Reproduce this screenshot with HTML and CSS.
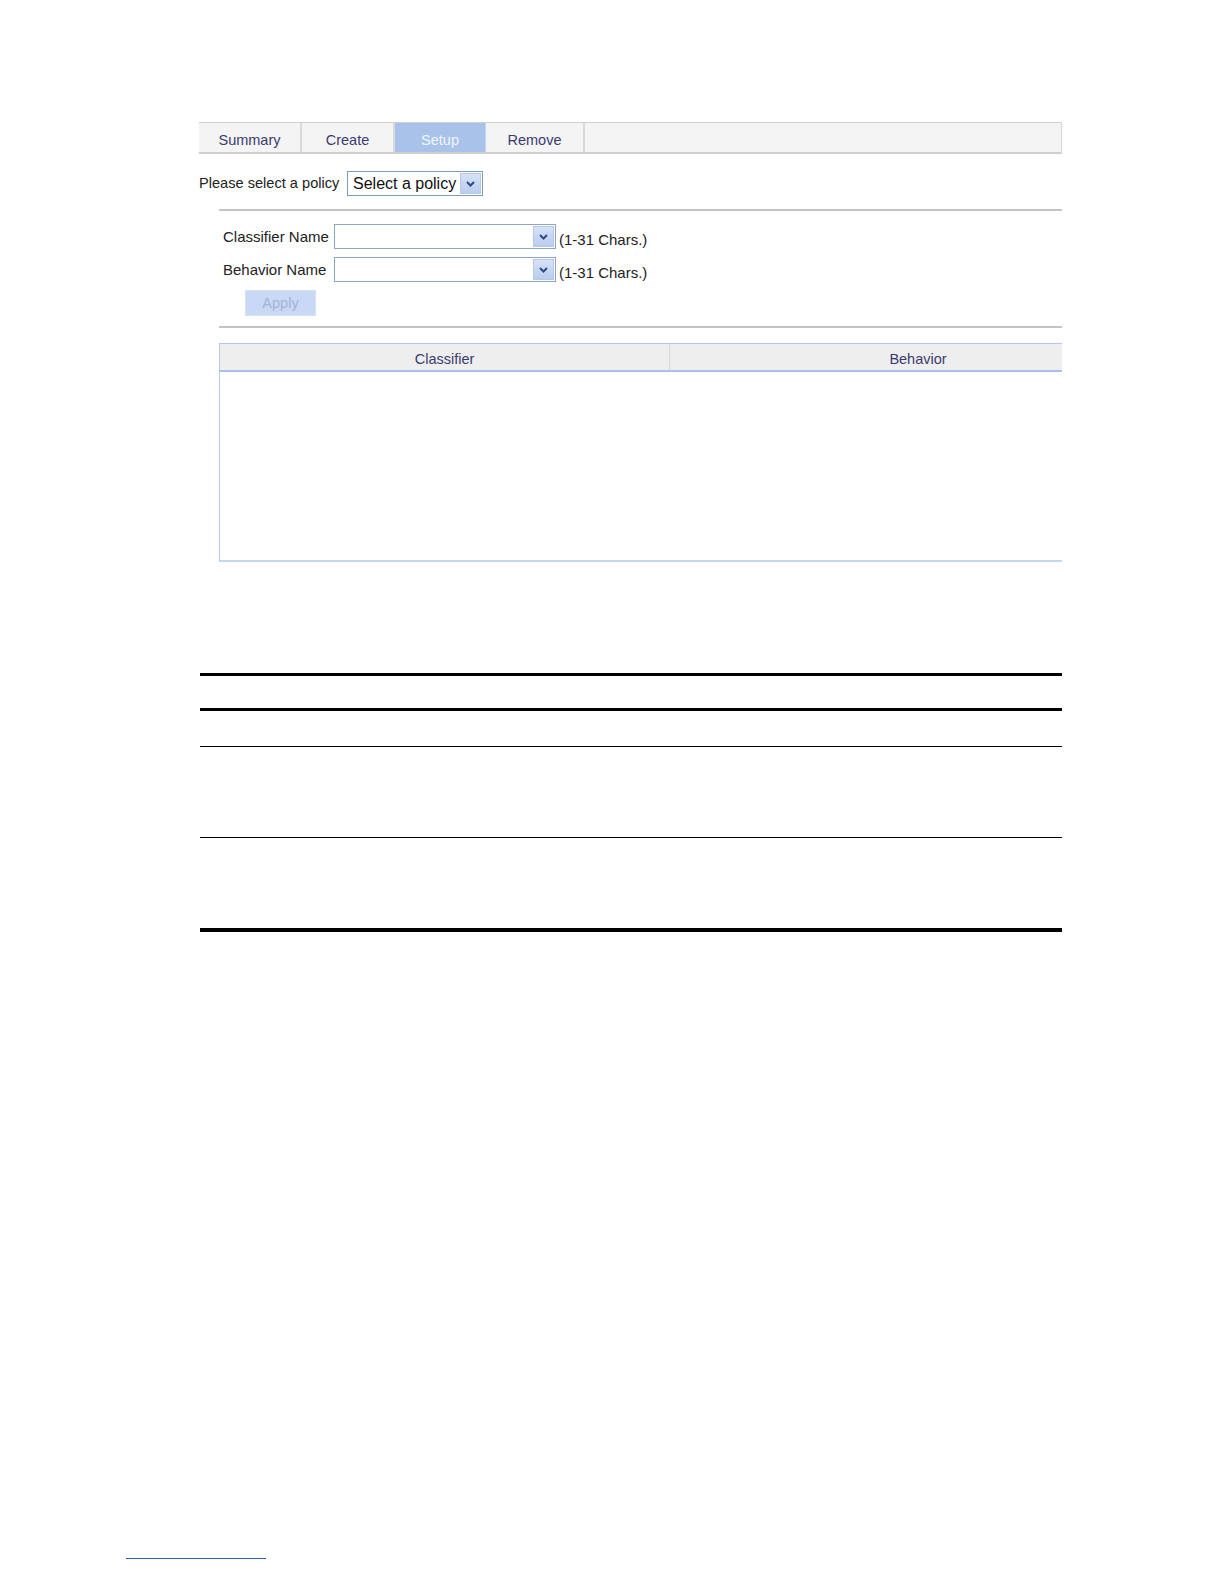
FILE: index.html
```html
<!DOCTYPE html>
<html>
<head>
<meta charset="utf-8">
<link rel="stylesheet" href="styles.css">
</head>
<body>
<div class="page">
  <div class="tabs">
    <div class="tab t-summary">Summary</div>
    <div class="tab t-create">Create</div>
    <div class="tab t-setup active">Setup</div>
    <div class="tab t-remove">Remove</div>
    <div class="tab-fill"></div>
  </div>

  <div class="policy-row">
    <span class="policy-label">Please select a policy</span>
    <div class="select policy-select">
      <span class="select-text">Select a policy</span>
      <span class="arrow"><svg width="9" height="6" viewBox="0 0 9 6"><path d="M1 1 L4.5 4.5 L8 1" fill="none" stroke="#2d4a8a" stroke-width="2"/></svg></span>
    </div>
  </div>

  <div class="panel">
    <div class="rule"></div>
    <div class="form-row">
      <span class="label">Classifier Name</span>
      <div class="select combo">
        <span class="select-text"></span>
        <span class="arrow"><svg width="9" height="6" viewBox="0 0 9 6"><path d="M1 1 L4.5 4.5 L8 1" fill="none" stroke="#2d4a8a" stroke-width="2"/></svg></span>
      </div>
      <span class="hint">(1-31 Chars.)</span>
    </div>
    <div class="form-row second">
      <span class="label">Behavior Name</span>
      <div class="select combo">
        <span class="select-text"></span>
        <span class="arrow"><svg width="9" height="6" viewBox="0 0 9 6"><path d="M1 1 L4.5 4.5 L8 1" fill="none" stroke="#2d4a8a" stroke-width="2"/></svg></span>
      </div>
      <span class="hint">(1-31 Chars.)</span>
    </div>
    <div class="btn-row">
      <div class="apply">Apply</div>
    </div>
    <div class="rule rule2"></div>

    <div class="grid">
      <div class="grid-head">
        <div class="col c1">Classifier</div>
        <div class="col c2">Behavior</div>
      </div>
      <div class="grid-body"></div>
    </div>
  </div>

  <div class="doc-table">
    <div class="line thick3 first"></div>
    <div class="row-a"></div>
    <div class="line thick3"></div>
    <div class="row-b"></div>
    <div class="line thin"></div>
    <div class="row-c"></div>
    <div class="line thin"></div>
    <div class="row-c"></div>
    <div class="line thick4"></div>
  </div>
</div>
<div class="footer-link"></div>
</body>
</html>
```

FILE: styles.css
```css
html, body {
  margin: 0;
  padding: 0;
  background: #ffffff;
}
body {
  font-family: "Liberation Sans", Arial, sans-serif;
  font-size: 14px;
  color: #222;
  height: 1584px;
  position: relative;
}
.page {
  padding-top: 122px;
  margin-left: 199px;
  width: 863px;
}
.tabs {
  display: flex;
  height: 29px;
  border-top: 1px solid #cfcfcf;
  border-bottom: 2px solid #cfcfcf;
  border-right: 1px solid #d8d8d8;
  background: #f4f4f4;
}
.tab {
  display: flex;
  align-items: center;
  justify-content: center;
  color: #3b3b70;
  font-size: 14.5px;
  border-right: 2px solid #d9d9d9;
  padding-top: 5px;
  box-sizing: border-box;
}
.t-summary { width: 103px; }
.t-create { width: 93px; }
.t-setup { width: 91px; }
.t-remove { width: 99px; }
.tab.active {
  background: #a8c2e9;
  color: #f2f5fb;
  border-right: 1px solid #c7d6ee;
}
.tab-fill { flex: 1; }

.policy-row {
  display: flex;
  align-items: center;
  margin-top: 16px;
  height: 27px;
}
.policy-label {
  color: #222;
  font-size: 14.6px;
  width: 148px;
  margin-top: -2px;
}
.select {
  display: flex;
  align-items: stretch;
  border: 1px solid #7f9db9;
  background: #fff;
  box-sizing: border-box;
  height: 25px;
}
.policy-select {
  width: 136px;
}
.select-text {
  flex: 1;
  padding-left: 5px;
  font-size: 16px;
  color: #111;
  display: flex;
  align-items: center;
}
.arrow {
  width: 19px;
  margin: 1px;
  background: linear-gradient(#d6e2f7, #b9cdef);
  border: 1px solid #b6c8e6;
  display: flex;
  align-items: center;
  justify-content: center;
}

.panel {
  margin-left: 20px;
}
.rule {
  height: 2px;
  background: #c4c4c4;
  margin-top: 12px;
}
.form-row {
  display: flex;
  align-items: center;
  margin-top: 13px;
  height: 25px;
}
.form-row.second {
  margin-top: 8px;
}
.label {
  width: 115px;
  padding-left: 4px;
  box-sizing: border-box;
  color: #222;
  font-size: 15px;
  margin-top: -1px;
}
.combo {
  width: 222px;
  border-color: #8ea6c6;
}
.hint {
  margin-left: 3px;
  margin-top: 6px;
  color: #222;
  font-size: 15px;
}
.btn-row {
  margin-top: 8px;
  padding-left: 26px;
}
.apply {
  width: 71px;
  height: 26px;
  background: #c8d8f5;
  color: #a3b4d4;
  display: flex;
  align-items: center;
  justify-content: center;
  font-size: 14.5px;
  border: 1px solid #d5e1f5;
  box-sizing: border-box;
}
.rule2 {
  margin-top: 10px;
}
.grid {
  margin-top: 15px;
  border-left: 1px solid #b8cbea;
  border-bottom: 2px solid #c6d5ee;
  border-top: 1px solid #b3c6e8;
}
.grid-head {
  display: flex;
  height: 26px;
  background: #eeeeee;
  border-bottom: 2px solid #a9c0e8;
}
.col {
  display: flex;
  align-items: center;
  justify-content: center;
  color: #3b3b70;
  font-size: 14.5px;
  padding-top: 3px;
  box-sizing: border-box;
}
.c1 {
  width: 450px;
  border-right: 1px solid #d8d8d8;
}
.c2 {
  flex: 1;
  padding-left: 104px;
}
.grid-body {
  height: 188px;
  background: #fff;
}

.doc-table {
  margin-left: 1px;
  width: 862px;
  margin-top: 111px;
}
.line { background: #000; }
.thick3 { height: 3px; }
.thick4 { height: 4px; }
.thin { height: 1px; }
.row-a { height: 32px; }
.row-b { height: 35px; }
.row-c { height: 90px; }

.footer-link {
  position: absolute;
  left: 126px;
  top: 1558px;
  width: 140px;
  height: 1px;
  background: #3a5ad0;
}
```
